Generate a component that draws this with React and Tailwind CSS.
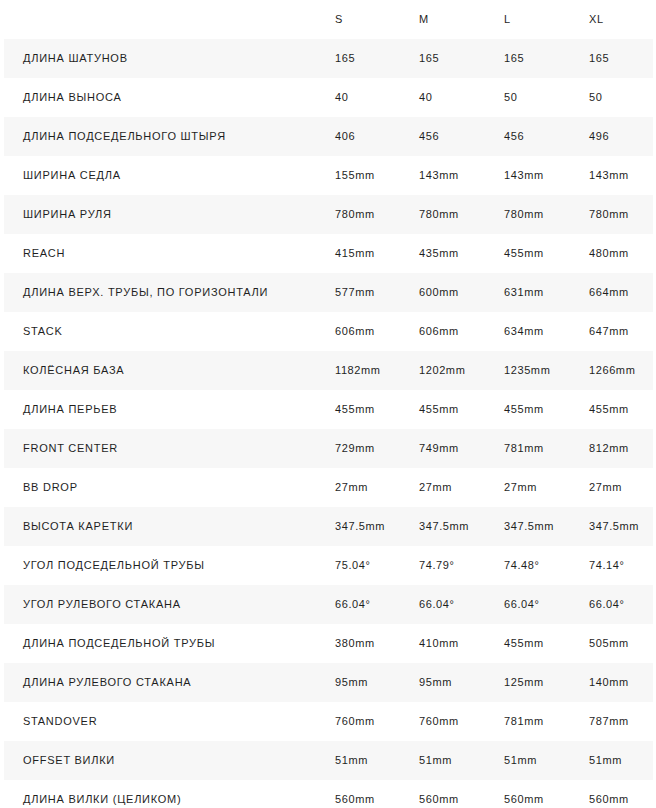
const sizes = ["S", "M", "L", "XL"];

const rows = [
    ["ДЛИНА ШАТУНОВ", "165", "165", "165", "165"],
    ["ДЛИНА ВЫНОСА", "40", "40", "50", "50"],
    ["ДЛИНА ПОДСЕДЕЛЬНОГО ШТЫРЯ", "406", "456", "456", "496"],
    ["ШИРИНА СЕДЛА", "155mm", "143mm", "143mm", "143mm"],
    ["ШИРИНА РУЛЯ", "780mm", "780mm", "780mm", "780mm"],
    ["REACH", "415mm", "435mm", "455mm", "480mm"],
    ["ДЛИНА ВЕРХ. ТРУБЫ, ПО ГОРИЗОНТАЛИ", "577mm", "600mm", "631mm", "664mm"],
    ["STACK", "606mm", "606mm", "634mm", "647mm"],
    ["КОЛЁСНАЯ БАЗА", "1182mm", "1202mm", "1235mm", "1266mm"],
    ["ДЛИНА ПЕРЬЕВ", "455mm", "455mm", "455mm", "455mm"],
    ["FRONT CENTER", "729mm", "749mm", "781mm", "812mm"],
    ["BB DROP", "27mm", "27mm", "27mm", "27mm"],
    ["ВЫСОТА КАРЕТКИ", "347.5mm", "347.5mm", "347.5mm", "347.5mm"],
    ["УГОЛ ПОДСЕДЕЛЬНОЙ ТРУБЫ", "75.04°", "74.79°", "74.48°", "74.14°"],
    ["УГОЛ РУЛЕВОГО СТАКАНА", "66.04°", "66.04°", "66.04°", "66.04°"],
    ["ДЛИНА ПОДСЕДЕЛЬНОЙ ТРУБЫ", "380mm", "410mm", "455mm", "505mm"],
    ["ДЛИНА РУЛЕВОГО СТАКАНА", "95mm", "95mm", "125mm", "140mm"],
    ["STANDOVER", "760mm", "760mm", "781mm", "787mm"],
    ["OFFSET ВИЛКИ", "51mm", "51mm", "51mm", "51mm"],
    ["ДЛИНА ВИЛКИ (ЦЕЛИКОМ)", "560mm", "560mm", "560mm", "560mm"],
];

const cols = "grid grid-cols-[312px_84px_85px_85px_1fr] items-center h-[39px]";

export default function App() {
    return (
        <div className="min-h-screen bg-white pl-1 pr-[3px] text-[#1f1f1f] font-['Liberation_Sans',Arial,sans-serif] text-[11px] tracking-[0.6px]">
            <div className={cols}>
                <div></div>
                {sizes.map((s) => (
                    <div key={s} className="pl-[19px]">
                        {s}
                    </div>
                ))}
            </div>
            {rows.map((row, i) => (
                <div
                    key={row[0]}
                    className={cols + (i % 2 === 0 ? " bg-[#f7f7f7]" : "")}
                >
                    <div className="pl-[19px] whitespace-nowrap tracking-[0.75px]">
                        {row[0]}
                    </div>
                    {row.slice(1).map((cell, j) => (
                        <div key={j} className="pl-[19px] whitespace-nowrap">
                            {cell}
                        </div>
                    ))}
                </div>
            ))}
        </div>
    );
}
